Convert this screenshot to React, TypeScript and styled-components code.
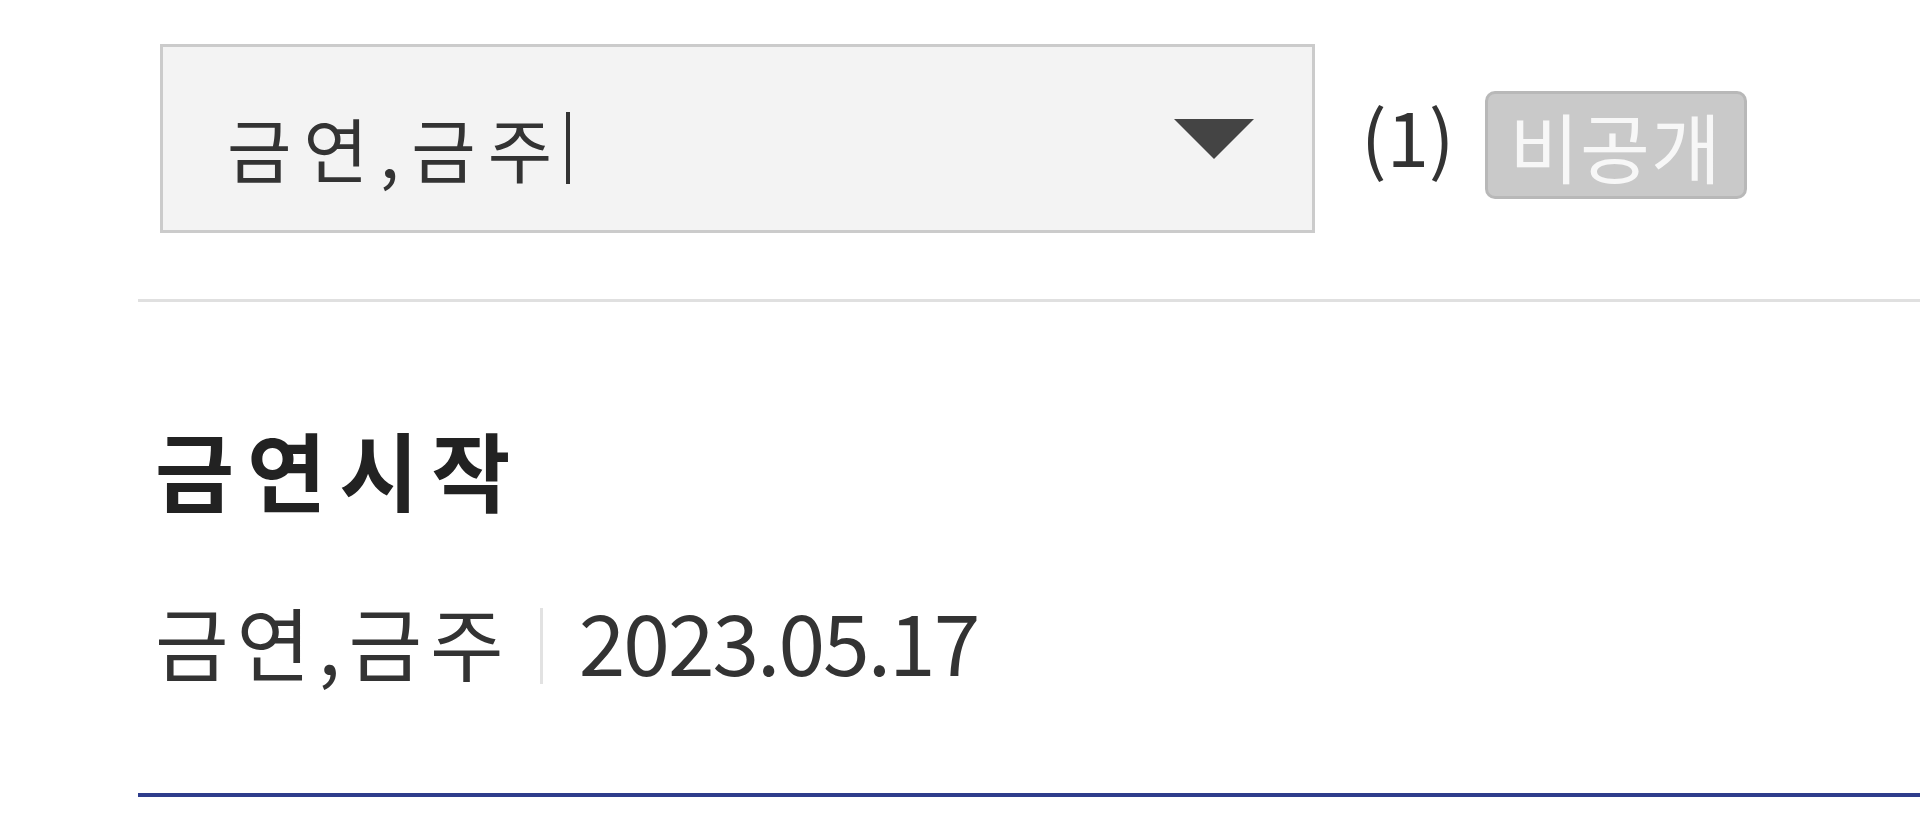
import styled, { createGlobalStyle } from 'styled-components'

const GlobalStyle = createGlobalStyle`
  html, body {
    margin: 0;
    padding: 0;
    background: #fff;
  }
  body {
    font-family: 'Malgun Gothic', 'Noto Sans CJK KR', 'Noto Sans', sans-serif;
    color: #333;
  }
`

const Page = styled.div`
  width: 1920px;
  height: 832px;
  overflow: hidden;
  padding-left: 138px;
  box-sizing: border-box;
`

const Toolbar = styled.div`
  display: flex;
  align-items: flex-start;
  height: 302px;
  padding: 44px 0 0 22px;
  box-sizing: border-box;
  border-bottom: 3px solid #e0e0e0;
`

const SelectBox = styled.div`
  width: 1155px;
  height: 189px;
  box-sizing: border-box;
  border: 3px solid #cbcbcb;
  background: #f3f3f3;
  display: flex;
  align-items: center;
  justify-content: space-between;
  padding: 0 58px 0 64px;
`

const SelectText = styled.span`
  padding-top: 18px;
  font-size: 70px;
  letter-spacing: 12px;
  color: #333;
  display: flex;
  align-items: center;
`

const Caret = styled.span`
  display: inline-block;
  width: 4px;
  height: 72px;
  margin: 0 0 0 2px;
  background: #333;
`

const Count = styled.span`
  margin: 0 30px 0 46px;
  font-size: 76px;
  color: #333;
  line-height: 180px;
`

const Badge = styled.span`
  margin-top: 47px;
  width: 262px;
  height: 108px;
  box-sizing: border-box;
  border: 3px solid #b8b8b8;
  border-radius: 10px;
  background: #c9c9c9;
  color: #f7f7f7;
  font-size: 76px;
  letter-spacing: 1px;
  display: flex;
  align-items: center;
  justify-content: center;
`

const Post = styled.div`
  padding: 124px 0 0 17px;
  height: 495px;
  box-sizing: border-box;
  border-bottom: 4px solid #2e3d8c;
`

const Title = styled.h3`
  margin: 0;
  font-size: 86px;
  font-weight: 700;
  letter-spacing: 13px;
  color: #222;
  line-height: 1;
`

const Meta = styled.div`
  margin-top: 84px;
  display: flex;
  align-items: center;
  font-size: 80px;
  line-height: 1;
  color: #333;
`

const Category = styled.span`
  letter-spacing: 8px;
`

const Sep = styled.span`
  width: 3px;
  height: 76px;
  margin: 12px 36px 0 28px;
  background: #e2e2e2;
`

const PostDate = styled.span`
  font-size: 84px;
  letter-spacing: -2px;
`

export default function App() {
  return (
    <>
      <GlobalStyle />
      <Page>
        <Toolbar>
          <SelectBox>
            <SelectText>
              금연,금주
              <Caret />
            </SelectText>
            <svg width="80" height="40" viewBox="0 0 80 40">
              <polygon points="0,0 80,0 40,40" fill="#444" />
            </svg>
          </SelectBox>
          <Count>(1)</Count>
          <Badge>비공개</Badge>
        </Toolbar>
        <Post>
          <Title>금연시작</Title>
          <Meta>
            <Category>금연,금주</Category>
            <Sep />
            <PostDate>2023.05.17</PostDate>
          </Meta>
        </Post>
      </Page>
    </>
  )
}
